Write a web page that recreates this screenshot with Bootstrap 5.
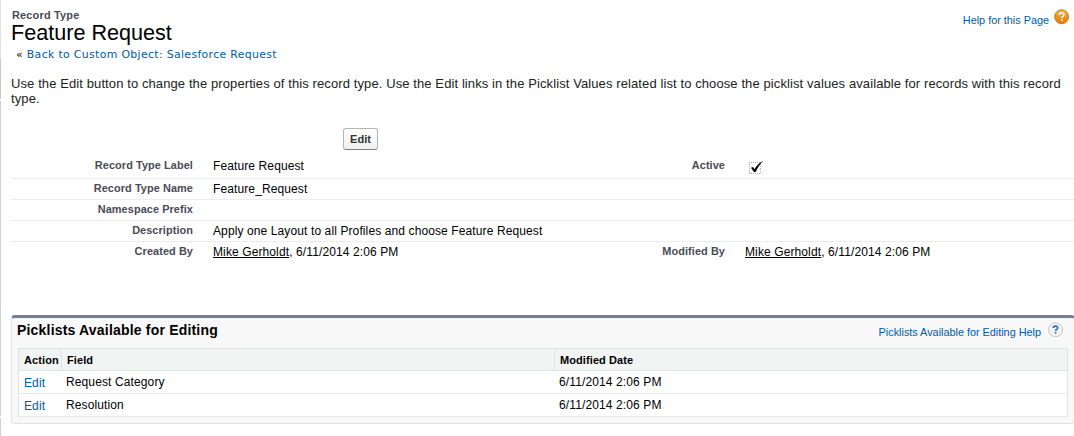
<!DOCTYPE html>
<html lang="en">
<head>
<meta charset="utf-8">
<meta name="viewport" content="width=device-width, initial-scale=1">
<title>Record Type: Feature Request</title>
<link href="https://cdn.jsdelivr.net/npm/bootstrap@5.3.0/dist/css/bootstrap.min.css" rel="stylesheet">
<style>
body{font-family:"Liberation Sans",Arial,sans-serif;font-size:12px;line-height:14px;color:#000;background:#fff;height:436px;overflow:hidden}
a{color:#015ba7;text-decoration:none}
.page{height:436px;padding-left:10px;border-left:1px solid;border-image:linear-gradient(#e3e3e3 59px,#c9c9c9 59px 100px,#fff 100px 102px,#cfcfcf 102px 415px,#fff 415px 417px,#cfcfcf 417px) 1}
.page-head{height:76px;padding-top:9px}
.page-type{font-size:10.92px;line-height:13px;font-weight:bold;color:#4a4a56;letter-spacing:.2px;padding-left:1px}
.page-title{font-size:21.6px;line-height:22px;font-weight:normal}
.crumb{font-family:"DejaVu Sans",Verdana,sans-serif;font-size:10.9px;line-height:14px;padding:4px 0 0 5px;letter-spacing:.34px}
.help-link{font-size:10.92px;letter-spacing:-.03px}
.related .help-link{padding-top:7px}
.intro{font-size:13px;line-height:15px;color:#222;height:52px;letter-spacing:.1px}
.btn-edit{font-size:11px;line-height:13px;font-weight:bold;color:#333;width:35px;height:22px;padding:0;border:1px solid #b5b5b5;border-bottom-color:#7f7f7f;border-radius:3px;background:linear-gradient(#fff,#f0f0f0);margin-left:332px}
.detail{height:21px;border-bottom:1px solid #ececec}
.detail.first{height:29px;padding-top:6px}
.detail:last-child{border:0}
.term{width:182px;flex:none;font-size:10.92px;font-weight:bold;color:#4a4a56;line-height:13px;padding-top:3px;letter-spacing:.08px}
.value{width:350px;flex:none;padding:3px 0 0 20px;letter-spacing:.11px}
.value a{color:#000;text-decoration:underline}
.related{height:109px;margin:52px -1px 0 0;border:1px solid #e0e3e5;border-top:3px solid #747e96;border-radius:4px;background:#f8f8f8;padding:0 6px}
.related h2{font-size:14px;line-height:17px;font-weight:bold;padding-top:4px;margin-left:-1px;letter-spacing:.19px}
.related-head{height:30px;padding-right:1px}
.grid-table{--bs-table-bg:transparent;border:1px solid #e0e3e5;background:#fff;table-layout:fixed;color:#000}
.grid-table>:not(caption)>*>*{padding:0 0 0 5px;line-height:14px;vertical-align:middle;border-bottom:1px solid #e8e8e8}
.grid-table th{font-size:11px;height:22px;background:#f2f3f3;border-bottom-color:#e0e3e5!important;letter-spacing:.09px}
.grid-table th+th{border-left:1px solid #e0e3e5}
.grid-table td{height:23px;letter-spacing:.12px}
.grid-table>tbody>tr>td{padding-top:2px}
.grid-table>tbody>tr>td+td{padding:0 0 0 4.5px}
</style>
</head>
<body>
<div class="page">
  <header class="page-head d-flex justify-content-between">
    <div>
      <div class="page-type">Record Type</div>
      <h1 class="page-title m-0">Feature Request</h1>
      <div class="crumb">« <a href="#">Back to Custom Object: Salesforce Request</a></div>
    </div>
    <div class="d-flex align-items-start pe-1">
      <a class="help-link pt-1" href="#">Help for this Page</a>
      <svg class="ms-1" width="17" height="16" viewBox="0 0 17 16" aria-hidden="true">
        <defs><linearGradient id="orange" x2="0" y2="1"><stop stop-color="#f7b03b"/><stop offset="1" stop-color="#df7d06"/></linearGradient></defs>
        <circle cx="8.6" cy="7.7" r="7" fill="url(#orange)" stroke="#b56e24" stroke-width=".8"/>
        <path d="M6.300 6c0-1.500 1-2.300 2.400-2.300s2.300.8 2.300 2c0 1.600-2.200 1.600-2.200 3.300M8.800 10.200v1.700" fill="none" stroke="#fff" stroke-width="1.500"/>
      </svg>
    </div>
  </header>
  <p class="intro m-0">Use the Edit button to change the properties of this record type. Use the Edit links in the Picklist Values related list to choose the picklist values available for records with this record type.</p>
  <button class="btn btn-edit d-block" type="button">Edit</button>
  <section>
    <div class="detail first d-flex">
      <div class="term text-end">Record Type Label</div><div class="value">Feature Request</div>
      <div class="term text-end">Active</div>
      <div class="value"><svg class="d-block" width="24" height="17" viewBox="0 0 24 17" role="img" aria-label="Checked">
        <path d="M4 3.500h12M4 14.500h12M4.500 5v9M15.500 5v9" fill="none" stroke="#aaa" stroke-dasharray="1 1"/>
        <path d="M6 8.700l2-.7 1.400 2.300C11.500 6.500 14.500 3.500 18.700 1.700c-3.500 2.800-6 6.500-8 11.300H9z" fill="#000"/>
      </svg></div>
    </div>
    <div class="detail d-flex"><div class="term text-end">Record Type Name</div><div class="value">Feature_Request</div></div>
    <div class="detail d-flex"><div class="term text-end">Namespace Prefix</div></div>
    <div class="detail d-flex"><div class="term text-end">Description</div><div class="value">Apply one Layout to all Profiles and choose Feature Request</div></div>
    <div class="detail d-flex">
      <div class="term text-end">Created By</div><div class="value"><a href="#">Mike Gerholdt</a>, 6/11/2014 2:06 PM</div>
      <div class="term text-end">Modified By</div><div class="value"><a href="#">Mike Gerholdt</a>, 6/11/2014 2:06 PM</div>
    </div>
  </section>
  <section class="related">
    <div class="related-head d-flex justify-content-between">
      <h2 class="mb-0">Picklists Available for Editing</h2>
      <div class="d-flex align-items-start">
        <a class="help-link" href="#">Picklists Available for Editing Help</a>
        <svg class="ms-1" width="22" height="20" viewBox="0 0 22 20" aria-hidden="true">
          <circle cx="10.500" cy="11.800" r="7" fill="#f4f4f4" stroke="#c9c9c9"/>
          <path d="M8.300 10.100c0-1.300.9-2 2.200-2s2.200.7 2.200 1.800c0 1.500-2.100 1.500-2.100 3.100M10.600 14v1.700" fill="none" stroke="#1f6fc8" stroke-width="1.600"/>
        </svg>
      </div>
    </div>
    <table class="table grid-table mb-0">
      <colgroup><col style="width:43px"><col style="width:493px"><col></colgroup>
      <thead><tr><th>Action</th><th>Field</th><th>Modified Date</th></tr></thead>
      <tbody>
        <tr><td><a href="#">Edit</a></td><td>Request Category</td><td>6/11/2014 2:06 PM</td></tr>
        <tr><td><a href="#">Edit</a></td><td>Resolution</td><td>6/11/2014 2:06 PM</td></tr>
      </tbody>
    </table>
  </section>
</div>
<script src="https://cdn.jsdelivr.net/npm/bootstrap@5.3.0/dist/js/bootstrap.bundle.min.js"></script>
</body>
</html>
